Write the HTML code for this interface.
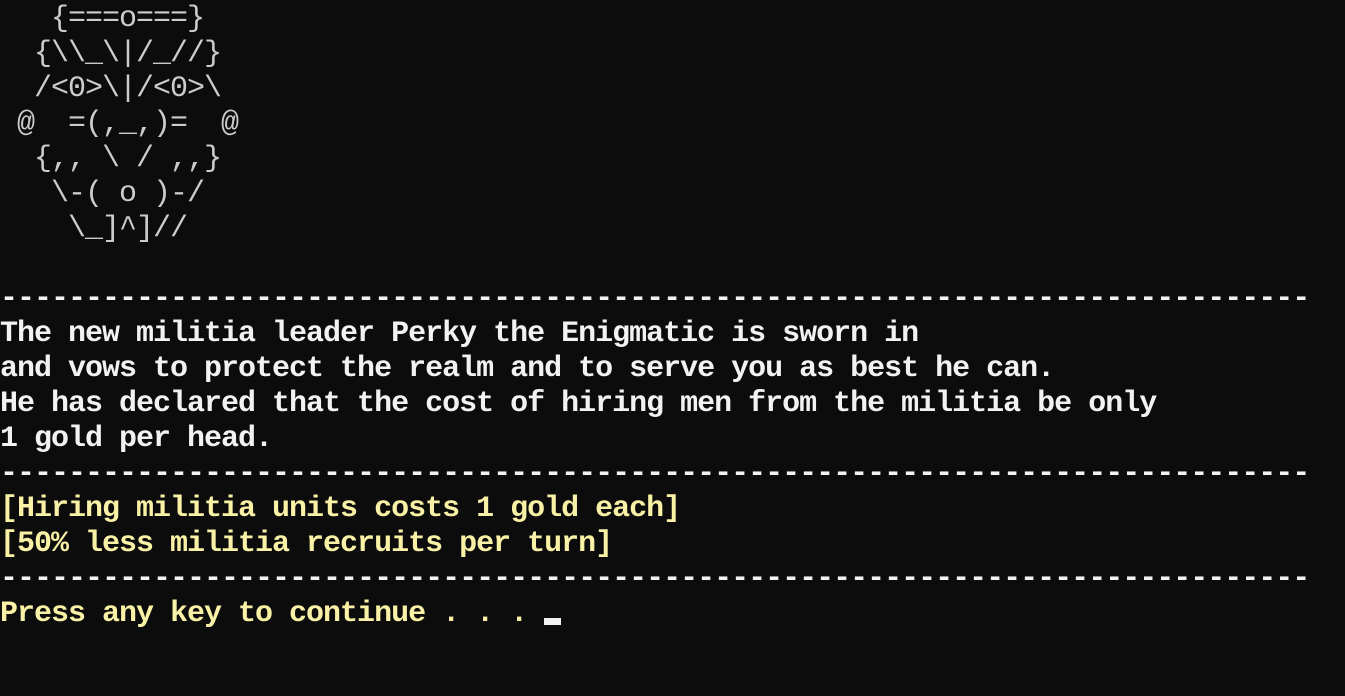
<!DOCTYPE html>
<html><head><meta charset="utf-8"><style>
html,body{margin:0;padding:0;background:#0c0c0c;width:1345px;height:696px;overflow:hidden}
pre{margin:0;padding:2px 0 0 0;font-family:"Liberation Mono","DejaVu Sans Mono",monospace;font-size:30px;line-height:35px;font-weight:bold;white-space:pre;letter-spacing:-1px}
.a{color:#cccccc;font-weight:normal}
.w{color:#f2f2f2}
.y{color:#f9f1a5}
.cur{display:inline-block;width:17px;height:7px;background:#f2f2f2;vertical-align:-4px}
</style></head><body><pre><span class="a">   {===o===}
  {\\_\|/_//}
  /&lt;0&gt;\|/&lt;0&gt;\
 @  =(,_,)=  @
  {,, \ / ,,}
   \-( o )-/
    \_]^]//</span>

<span class="w">-----------------------------------------------------------------------------
The new militia leader Perky the Enigmatic is sworn in
and vows to protect the realm and to serve you as best he can.
He has declared that the cost of hiring men from the militia be only
1 gold per head.
-----------------------------------------------------------------------------</span>
<span class="y">[Hiring militia units costs 1 gold each]
[50% less militia recruits per turn]</span>
<span class="w">-----------------------------------------------------------------------------</span>
<span class="y">Press any key to continue . . . </span><span class="cur"></span></pre></body></html>
